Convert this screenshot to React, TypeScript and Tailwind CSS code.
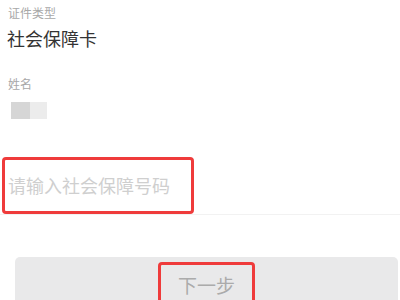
import React from "react";

const App = () => {
  return (
    <div
      className="w-[400px] h-[300px] bg-white overflow-hidden"
      style={{ fontFamily: '"Noto Sans CJK SC", "Noto Sans", sans-serif' }}
    >
      {/* Document type */}
      <div className="pl-2 pt-[4px]">
        <div className="text-[12px] leading-[18px] text-[#a8a8a8]">证件类型</div>
        <div className="mt-[3px] -ml-[1px] text-[18px] leading-[26px] text-[#333]">社会保障卡</div>
      </div>

      {/* Name */}
      <div className="pl-2 mt-[24px]">
        <div className="text-[12px] leading-[18px] text-[#a8a8a8]">姓名</div>
        <div className="mt-[9px] ml-[3px] flex h-[17px] w-[40px]">
          <div className="w-[19px] bg-[#d6d6d6]" />
          <div className="w-[17px] bg-[#ececec]" />
        </div>
      </div>

      {/* Input */}
      <div className="mt-[38px] border-b border-[#f2f2f2]">
        <div className="ml-[2px] w-[192px] h-[57px] border-[3px] border-[#ef3b3b] rounded-[4px] flex items-center pl-[3px]">
          <span className="text-[18px] text-[#cfcfcf]">请输入社会保障号码</span>
        </div>
      </div>

      {/* Next button */}
      <div className="mt-[42px] ml-[15px] mr-[2px] h-[60px] bg-[#e9e9ea] rounded-[5px] flex justify-center pt-[5px]">
        <div className="h-[60px] w-[97px] border-[3px] border-[#ef3b3b] rounded-[4px] flex justify-center pt-[6px]">
          <span className="text-[19px] text-[#ababab]">下一步</span>
        </div>
      </div>
    </div>
  );
};

export default App;
